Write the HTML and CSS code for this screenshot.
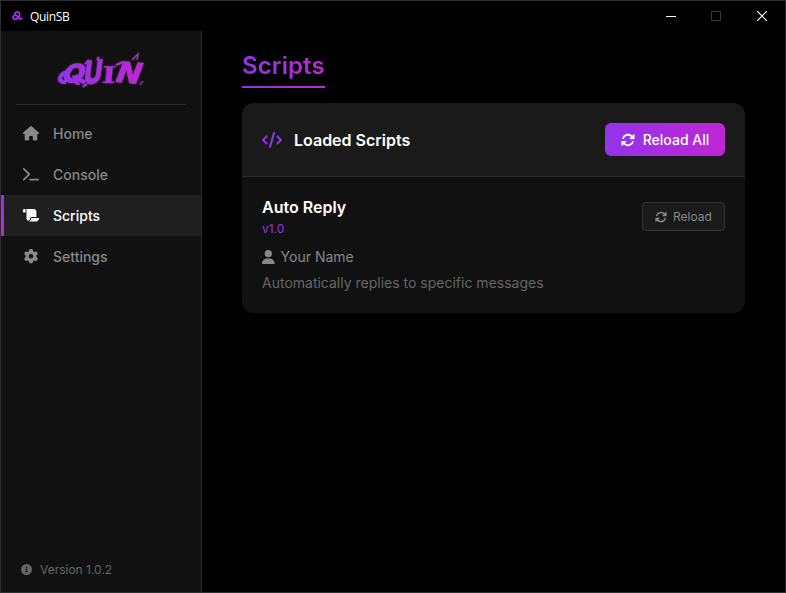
FILE: index.html
```html
<!DOCTYPE html>
<html lang="en">
<head>
<meta charset="utf-8">
<title>QuinSB</title>
<link rel="stylesheet" href="styles.css">
</head>
<body>
<svg class="defs" width="0" height="0" aria-hidden="true">
  <symbol id="sync" viewBox="0 0 512 512"><path d="M142.9 142.9c62.2-62.2 162.7-62.5 225.3-1L327 183c-6.900 6.900-8.900 17.200-5.200 26.200s12.500 14.800 22.200 14.800H463.500c0 0 0 0 0 0H472c13.300 0 24-10.700 24-24V72c0-9.700-5.800-18.500-14.800-22.200s-19.300-1.700-26.200 5.200L413.400 96.600c-87.600-86.500-228.700-86.200-315.800 1C73.200 122 55.600 150.700 44.800 181.400c-5.900 16.700 2.900 34.900 19.500 40.800s34.900-2.900 40.800-19.500c7.700-21.800 20.200-42.300 37.800-59.800zM16 312v7.600 .7V440c0 9.700 5.800 18.500 14.800 22.200s19.300 1.700 26.200-5.200l41.600-41.600c87.600 86.500 228.700 86.200 315.800-1c24.400-24.400 42.100-53.100 52.900-83.700c5.900-16.700-2.900-34.900-19.500-40.800s-34.900 2.900-40.800 19.500c-7.700 21.800-20.200 42.300-37.800 59.800c-62.200 62.200-162.700 62.500-225.300 1L185 329c6.900-6.900 8.900-17.200 5.200-26.200s-12.500-14.800-22.200-14.800H48.400h-.7H40c-13.300 0-24 10.700-24 24z"/></symbol>
</svg>
<div class="window">
  <header class="titlebar">
    <svg class="app-icon" viewBox="0 0 12 11"><g fill="none" stroke="#9f31e2" stroke-width="1.9"><path d="M8.300 4.500C9 1.500 6 .2 4 1.500 2 3 3.500 4.500 5 5L9.500 9.500M3.500 4.500C-.5 6 .8 9.600 4 9 6.500 8.600 8 7 8.300 4.500M9.500 7.500l2 1.500"/></g></svg>
    <span class="app-title">QuinSB</span>
    <div class="controls">
      <svg width="10" height="10"><path d="M0 5.500h10" stroke="#fff"/></svg>
      <svg width="10" height="10"><path d="M.5.5h9v9h-9z" fill="none" stroke="#3c3c3c"/></svg>
      <svg width="10" height="10"><path d="M0 0l10 10M10 0L0 10" stroke="#fff" stroke-width="1.200"/></svg>
    </div>
  </header>
  <div class="body">
    <aside class="sidebar">
      <div class="brand">
        <svg class="logo" viewBox="0 0 100 46" role="img" aria-label="Quin">
          <defs><linearGradient id="g" gradientUnits="userSpaceOnUse" x1="6" y1="0" x2="96" y2="0"><stop offset="0" stop-color="#9333ea"/><stop offset="1" stop-color="#c026d3"/></linearGradient></defs>
          <rect width="100" height="46" fill="url(#g)" mask="url(#wordmark)"/>
          <mask id="wordmark"><g class="letters">
            <text transform="translate(10 34) rotate(4) skewX(-18) scale(.84 .82)">Q</text>
            <text transform="translate(33 37) rotate(-7) skewX(-14) scale(.76 .98)">U</text>
            <text class="slab" transform="translate(51 35) skewX(-5) scale(.95 .7)">I</text>
            <text transform="translate(64 34) rotate(5) skewX(-16) scale(.92 .9)">N</text>
          </g>
          <g fill="none" stroke="#fff" stroke-width="2"><path stroke-width="4" d="M19 24c-10 1-13 11-3 10M25 28l10 7"/><path d="M35 16l4-4M33 39l4-3M47 12l2-3M66 17l7-3"/><path stroke-width="1.200" d="M82 12l6-6-1 6M93 33l-3 4"/></g></mask>
        </svg>
      </div>
      <nav>
        <a class="item"><svg viewBox="0 0 576 512"><path d="M575.8 255.5c0 18-15 32.1-32 32.1h-32l.7 160.2c0 2.700-.2 5.400-.5 8.100V472c0 22.100-17.900 40-40 40H456 392c-22.100 0-40-17.900-40-40V384c0-17.700-14.300-32-32-32H256c-17.700 0-32 14.300-32 32v88c0 22.100-17.900 40-40 40H104c-22.100 0-40-17.900-40-40V287.600H32c-18 0-32-14-32-32.100c0-9 3-17 10-24L266.400 8c7-7 15-8 22-8s15 2 21 7L564.800 231.500c8 7 12 15 11 24z"/></svg>Home</a>
        <a class="item"><svg viewBox="0 0 576 512"><path d="M9.400 86.600C-3.100 74.100-3.100 53.900 9.400 41.400s32.800-12.500 45.300 0l192 192c12.500 12.500 12.500 32.800 0 45.300l-192 192c-12.500 12.500-32.800 12.500-45.300 0s-12.500-32.800 0-45.300L178.700 256 9.400 86.600zM256 416H544c17.700 0 32 14.300 32 32s-14.300 32-32 32H256c-17.700 0-32-14.300-32-32s14.300-32 32-32z"/></svg>Console</a>
        <a class="item active"><svg viewBox="0 0 576 512"><path d="M0 80v48c0 17.700 14.300 32 32 32H96V80c0-26.500-21.500-48-48-48S0 53.500 0 80zM112 32c10 13.400 16 30 16 48V384c0 35.300 28.700 64 64 64s64-28.700 64-64v-5.300c0-32.400 26.300-58.700 58.700-58.700H480V128c0-53-43-96-96-96H112zM464 480c61.900 0 112-50.100 112-112c0-8.800-7.200-16-16-16H314.700c-14.700 0-26.700 11.900-26.700 26.700V384c0 53-43 96-96 96H464z"/></svg>Scripts</a>
        <a class="item"><svg viewBox="0 0 512 512"><path d="M495.900 166.600c3.200 8.700 .5 18.400-6.400 24.600l-43.300 39.400c1.100 8.300 1.700 16.800 1.700 25.400s-.6 17.100-1.700 25.400l43.300 39.400c6.900 6.200 9.600 15.900 6.400 24.600c-4.400 11.900-9.700 23.300-15.800 34.300l-4.700 8.100c-6.600 11-14 21.400-22.100 31.200c-5.900 7.200-15.700 9.600-24.500 6.800l-55.700-17.700c-13.400 10.300-28.200 18.900-44 25.400l-12.500 57.100c-2 9.100-9 16.300-18.200 17.800c-13.800 2.300-28 3.500-42.500 3.500s-28.700-1.200-42.500-3.500c-9.200-1.500-16.200-8.700-18.200-17.800l-12.500-57.100c-15.800-6.500-30.600-15.100-44-25.400L83.100 425.900c-8.800 2.800-18.600 .3-24.500-6.800c-8.100-9.800-15.500-20.200-22.100-31.200l-4.700-8.100c-6.100-11-11.400-22.400-15.800-34.300c-3.200-8.700-.5-18.400 6.400-24.600l43.300-39.400C64.600 273.100 64 264.600 64 256s.6-17.100 1.700-25.400L22.400 191.200c-6.900-6.200-9.600-15.900-6.400-24.600c4.400-11.900 9.700-23.300 15.800-34.300l4.700-8.100c6.600-11 14-21.400 22.100-31.200c5.900-7.200 15.700-9.600 24.500-6.800l55.700 17.700c13.400-10.300 28.200-18.900 44-25.400l12.500-57.100c2-9.100 9-16.300 18.200-17.800C227.300 1.200 241.500 0 256 0s28.700 1.200 42.500 3.500c9.200 1.500 16.200 8.700 18.200 17.800l12.500 57.100c15.800 6.500 30.600 15.100 44 25.400l55.700-17.700c8.800-2.800 18.600-.3 24.500 6.800c8.100 9.800 15.500 20.200 22.100 31.200l4.700 8.100c6.100 11 11.400 22.400 15.800 34.300zM256 336a80 80 0 1 0 0-160 80 80 0 1 0 0 160z"/></svg>Settings</a>
      </nav>
      <div class="version"><svg viewBox="0 0 512 512"><path d="M256 512A256 256 0 1 0 256 0a256 256 0 1 0 0 512zM216 336h24V272H216c-13.300 0-24-10.700-24-24s10.700-24 24-24h48c13.300 0 24 10.700 24 24v88h8c13.300 0 24 10.700 24 24s-10.700 24-24 24H216c-13.300 0-24-10.700-24-24s10.700-24 24-24zm40-208a32 32 0 1 1 0 64 32 32 0 1 1 0-64z"/></svg>Version 1.0.2</div>
    </aside>
    <main>
      <h1><span>Scripts</span></h1>
      <section class="card">
        <div class="card-head">
          <svg class="code" viewBox="0 0 640 512"><path d="M392.800 1.200c-17-4.900-34.700 5-39.600 22l-128 448c-4.900 17 5 34.700 22 39.600s34.700-5 39.600-22l128-448c4.900-17-5-34.700-22-39.600zm80.600 120.100c-12.500 12.500-12.500 32.800 0 45.300L562.700 256l-89.400 89.400c-12.500 12.500-12.500 32.800 0 45.300s32.800 12.500 45.300 0l112-112c12.500-12.500 12.500-32.800 0-45.300l-112-112c-12.500-12.500-32.800-12.500-45.300 0zm-306.700 0c-12.500-12.500-32.800-12.500-45.300 0l-112 112c-12.500 12.500-12.500 32.800 0 45.300l112 112c12.500 12.500 32.800 12.500 45.300 0s12.500-32.800 0-45.300L77.300 256l89.400-89.400c12.500-12.500 12.500-32.800 0-45.300z"/></svg>
          <h2>Loaded Scripts</h2>
          <button class="primary"><svg><use href="#sync"/></svg>Reload All</button>
        </div>
        <div class="script">
          <div class="info">
            <h3>Auto Reply</h3>
            <div class="ver">v1.0</div>
            <div class="author"><svg viewBox="0 0 448 512"><path d="M224 256A128 128 0 1 0 224 0a128 128 0 1 0 0 256zm-45.700 48C79.800 304 0 383.800 0 482.300C0 498.700 13.300 512 29.700 512H418.300c16.400 0 29.700-13.300 29.700-29.700C448 383.800 368.200 304 269.700 304H178.300z"/></svg>Your Name</div>
            <p>Automatically replies to specific messages</p>
          </div>
          <button class="secondary"><svg><use href="#sync"/></svg>Reload</button>
        </div>
      </section>
    </main>
  </div>
</div>
</body>
</html>
```
FILE: styles.css
```css
* { box-sizing: border-box; margin: 0; padding: 0; }
body { width: 786px; height: 593px; overflow: hidden; background: #000; font-family: Inter, sans-serif; color: #fff; }
svg { fill: currentColor; flex: none; display: block; }
.defs { position: absolute; }
.window { height: 593px; border: 1px solid #2d2d2d; display: flex; flex-direction: column; }
.titlebar { height: 30px; display: flex; align-items: center; padding-left: 11px; }
.app-icon { width: 11px; height: 10px; }
.app-title { font: 12px "Open Sans", sans-serif; margin-left: 7px; letter-spacing: -.35px; }
.controls { display: flex; gap: 35px; margin-left: auto; padding-right: 18px; }
.controls svg:not(:last-child) { margin-left: -1px; margin-right: 1px; }
.body { flex: 1; display: flex; min-height: 0; }
.sidebar { width: 201px; background: #111; border-right: 1px solid #2a2a2a; display: flex; flex-direction: column; }
.brand { height: 74px; margin: 0 15px; border-bottom: 1px solid #2a2a2a; padding: 17px 0 0 34px; }
.logo { width: 100px; height: 46px; filter: drop-shadow(0 0 1px #4a4050); }
.letters { font: 900 33px Inter, sans-serif; fill: #fff; }
.slab { font-family: "DejaVu Serif", serif; }
nav { padding-top: 8px; }
.item { height: 41px; display: flex; align-items: center; gap: 12px; padding-left: 20px; font-size: 14px; font-weight: 500; color: #888; }
.item svg { width: 20px; height: 14.400px; }
.item.active { color: #fff; background: #1f1f1f; border-left: 3px solid; border-image: linear-gradient(#9333ea, #c026d3) 1; padding-left: 17px; }
.version { margin-top: auto; height: 46px; display: flex; align-items: center; gap: 8px; padding-left: 20px; font-size: 12px; color: #666; }
.version svg { width: 11px; height: 11px; }
main { flex: 1; padding: 17px 40px; }
h1 { width: 83px; font-size: 24px; line-height: 36px; font-weight: 600; letter-spacing: .1px; padding-bottom: 2px; height: 40px; border-bottom: 2px solid; border-image: linear-gradient(90deg, #9333ea, #c026d3) 1; }
h1 span { background: linear-gradient(90deg, #9333ea, #c026d3); background-clip: text; color: transparent; }
.card { margin-top: 15px; background: #111; border-radius: 12px; overflow: hidden; height: 210px; }
.card-head { height: 74px; background: #1a1a1a; border-bottom: 1px solid #2a2a2a; display: flex; align-items: center; padding: 0 20px; }
.code { width: 20px; height: 16px; color: #9333ea; }
h2 { font-size: 16px; font-weight: 600; margin-left: 12px; }
button { font-family: inherit; display: flex; align-items: center; justify-content: center; margin-left: auto; }
.primary { width: 120px; height: 33px; gap: 8px; border: 0; border-radius: 6px; color: #fff; font-size: 14px; font-weight: 500; background: linear-gradient(90deg, #9333ea, #c026d3); }
.primary svg { width: 14px; height: 14px; }
.script { display: flex; padding: 20px; }
h3 { font-size: 16px; line-height: 20px; font-weight: 600; }
.ver { font-size: 12px; line-height: 16px; margin-top: 4px; color: #9333ea; }
.author { display: flex; align-items: center; gap: 6px; font-size: 14px; line-height: 18px; margin-top: 11px; color: #888; }
.author svg { width: 12.600px; height: 14.400px; }
p { font-size: 14px; line-height: 18px; margin-top: 8px; color: #666; }
.secondary { width: 83px; height: 29px; margin-top: 5px; gap: 6px; border: 1px solid #333; border-radius: 4px; color: #888; background: #1a1a1a; font-size: 12px; }
.secondary svg { width: 12px; height: 12px; }
```
